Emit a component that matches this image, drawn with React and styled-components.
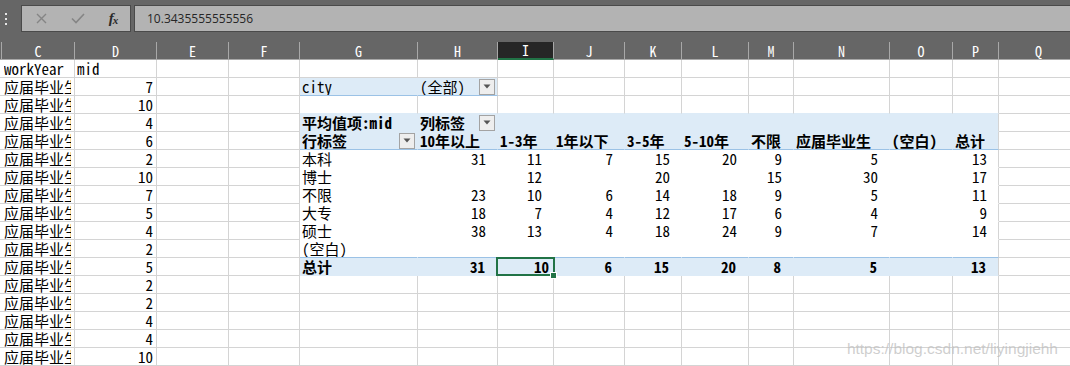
import React from 'react';
import styled, { createGlobalStyle, css } from 'styled-components';

const GRID = '#d4d4d4';
const BAND = '#ddebf7';
const BAND_LINE = '#9bc2e6';
const GREEN = '#217346';
const WHITE = '#ffffff';
const SHEET_FONT = `"Noto Sans Mono CJK SC", "Liberation Mono", "Noto Sans CJK SC", monospace`;

const COLUMNS = [
  { key: '', w: 2 },
  { key: 'C', w: 73 },
  { key: 'D', w: 82 },
  { key: 'E', w: 72 },
  { key: 'F', w: 71 },
  { key: 'G', w: 118 },
  { key: 'H', w: 80 },
  { key: 'I', w: 56 },
  { key: 'J', w: 71 },
  { key: 'K', w: 57 },
  { key: 'L', w: 67 },
  { key: 'M', w: 45 },
  { key: 'N', w: 96 },
  { key: 'O', w: 63 },
  { key: 'P', w: 46 },
  { key: 'Q', w: 80 },
];
const TEMPLATE = COLUMNS.map((c) => `${c.w}px`).join(' ');

const LEFT_VALUES = [7, 10, 4, 6, 2, 10, 7, 5, 4, 2, 5, 2, 2, 4, 4, 10];
const HEADS = ['10年以上', '1-3年', '1年以下', '3-5年', '5-10年', '不限', '应届毕业生', '(空白)', '总计'];
const PIVOT = [
  ['本科', [31, 11, 7, 15, 20, 9, 5, '', 13]],
  ['博士', ['', 12, '', 20, '', 15, 30, '', 17]],
  ['不限', [23, 10, 6, 14, 18, 9, 5, '', 11]],
  ['大专', [18, 7, 4, 12, 17, 6, 4, '', 9]],
  ['硕士', [38, 13, 4, 18, 24, 9, 7, '', 14]],
  ['(空白)', ['', '', '', '', '', '', '', '', '']],
];
const TOTALS = [31, 10, 6, 15, 20, 8, 5, '', 13];

function buildRows() {
  const rows = Array.from({ length: 17 }, () => COLUMNS.map(() => ({})));
  rows[0][1] = { text: 'workYear' };
  rows[0][2] = { text: 'mid' };
  LEFT_VALUES.forEach((v, i) => {
    rows[i + 1][1] = { text: '应届毕业生' };
    rows[i + 1][2] = { text: String(v), align: 'right' };
  });
  const G = 5;
  const P = 14;
  const span = (r, fn) => {
    for (let c = G; c <= P; c++) rows[r][c] = { ...rows[r][c], ...fn(c) };
  };
  rows[1][G] = { text: 'city', bg: BAND, rb: BAND, bb: BAND_LINE };
  rows[1][G + 1] = { text: '(全部)', bg: BAND, bb: BAND_LINE, drop: true, pr: 2 };
  span(2, () => ({ bb: BAND }));
  span(3, (c) => ({ bg: BAND, rb: c === P ? GRID : BAND, bb: BAND, bold: true }));
  rows[3][G] = { ...rows[3][G], text: '平均值项:mid' };
  rows[3][G + 1] = { ...rows[3][G + 1], text: '列标签', drop: true, pr: 2 };
  span(4, (c) => ({
    bg: BAND,
    rb: c === P ? GRID : BAND,
    bb: BAND_LINE,
    bold: true,
    text: c === G ? '行标签' : HEADS[c - G - 1],
  }));
  rows[4][G] = { ...rows[4][G], drop: true, pr: 2 };
  PIVOT.forEach(([label, vals], i) => {
    span(5 + i, (c) => ({
      rb: c === P ? GRID : WHITE,
      bb: i === PIVOT.length - 1 ? BAND_LINE : WHITE,
      text: c === G ? label : String(vals[c - G - 1]),
      align: c === G ? 'left' : 'right',
      pr: c === G ? 3 : 11,
    }));
  });
  span(11, (c) => ({
    bg: BAND,
    rb: c === P ? GRID : BAND,
    bb: BAND,
    bold: true,
    text: c === G ? '总计' : String(TOTALS[c - G - 1]),
    align: c === G ? 'left' : 'right',
    pr: c === G ? 3 : 12,
  }));
  rows[11][G + 2] = { ...rows[11][G + 2], selected: true, pr: 4 };
  return rows;
}

const ROWS = buildRows();

const GlobalStyle = createGlobalStyle`
  html, body { margin: 0; padding: 0; background: #ffffff; }
  body { overflow: hidden; }
`;

const Window = styled.div`
  position: relative;
  width: 1070px;
  height: 366px;
  overflow: hidden;
  background: #ffffff;
  font-family: ${SHEET_FONT};
  font-size: 15px;
  color: #000;
`;

const TopBar = styled.div`
  height: 42px;
  background: #666666;
  display: flex;
  align-items: flex-start;
  padding-top: 5px;
  box-sizing: border-box;
`;

const Grip = styled.div`
  width: 21px;
  height: 27px;
  display: flex;
  align-items: center;
  padding-left: 5px;
  box-sizing: border-box;
`;

const ActionBox = styled.div`
  width: 110px;
  height: 27px;
  background: #b3b3b3;
  border: 1px solid #4a4a4a;
  box-sizing: border-box;
  display: flex;
  align-items: center;
`;

const ActionSlot = styled.div`
  width: ${(p) => p.$w}px;
  height: 100%;
  display: flex;
  align-items: center;
  justify-content: center;
`;

const Fx = styled.span`
  font-family: "Liberation Serif", serif;
  font-style: italic;
  font-weight: 700;
  font-size: 15px;
  color: #2a2a2a;
  letter-spacing: -1px;
`;

const FxSub = styled.span`
  font-size: 11px;
  position: relative;
  top: 1px;
`;

const FormulaBox = styled.div`
  flex: 1;
  margin-left: 3px;
  height: 27px;
  background: #b3b3b3;
  border: 1px solid #4a4a4a;
  border-right: none;
  box-sizing: border-box;
  padding-left: 12px;
  display: flex;
  align-items: center;
  font-family: "Open Sans", "Noto Sans", sans-serif;
  font-size: 12px;
  color: #262626;
`;

const HeaderRow = styled.div`
  display: grid;
  grid-template-columns: ${TEMPLATE};
  height: 18px;
  background: #666666;
`;

const HeadCell = styled.div`
  box-sizing: border-box;
  height: 18px;
  border-right: 1px solid #a8a8a8;
  border-bottom: ${(p) => (p.$sel ? `2px solid ${GREEN}` : '1px solid #a8a8a8')};
  background: ${(p) => (p.$sel ? '#262626' : 'transparent')};
  color: #ffffff;
  font-size: 14px;
  display: flex;
  align-items: center;
  justify-content: center;
  overflow: hidden;
`;

const Sheet = styled.div`
  display: grid;
  grid-template-columns: ${TEMPLATE};
  grid-auto-rows: 18px;
`;

const Cell = styled.div`
  box-sizing: border-box;
  height: 18px;
  border-right: 1px solid ${(p) => p.$rb || GRID};
  border-bottom: 1px solid ${(p) => p.$bb || GRID};
  background: ${(p) => p.$bg || WHITE};
  display: flex;
  align-items: center;
  justify-content: ${(p) => (p.$align === 'right' ? 'flex-end' : 'space-between')};
  padding: 0 ${(p) => p.$pr ?? 3}px 0 2px;
  white-space: nowrap;
  overflow: hidden;
  font-weight: ${(p) => (p.$bold ? 700 : 400)};
  ${(p) =>
    p.$sel &&
    css`
      position: relative;
      overflow: visible;
      &::after {
        content: '';
        position: absolute;
        left: -2px;
        right: -2px;
        top: -1px;
        bottom: -1px;
        border: 2px solid ${GREEN};
        z-index: 2;
        pointer-events: none;
      }
      &::before {
        content: '';
        position: absolute;
        right: -4px;
        bottom: -4px;
        width: 5px;
        height: 5px;
        background: ${GREEN};
        border: 1px solid #ffffff;
        z-index: 3;
      }
    `}
`;

const CellText = styled.span`
  overflow: hidden;
`;

const DropButton = styled.span`
  flex: none;
  width: 16px;
  height: 16px;
  box-sizing: border-box;
  border: 1px solid #a3a3a3;
  background: #eeeeee;
  display: flex;
  align-items: center;
  justify-content: center;
`;

const Watermark = styled.div`
  position: absolute;
  right: 12px;
  bottom: 8px;
  font-family: "Liberation Sans", Arial, sans-serif;
  font-size: 15.5px;
  color: rgba(190, 190, 190, 0.75);
  pointer-events: none;
`;

function Dropdown() {
  return (
    <DropButton>
      <svg width="8" height="5" viewBox="0 0 8 5">
        <polygon points="0.5,0.5 7.5,0.5 4,4.5" fill="#555" />
      </svg>
    </DropButton>
  );
}

export default function App() {
  return (
    <>
      <GlobalStyle />
      <Window>
        <TopBar>
          <Grip>
            <svg width="3" height="12" viewBox="0 0 3 12">
              <rect x="0" y="0" width="2" height="2" fill="#e6e6e6" />
              <rect x="0" y="5" width="2" height="2" fill="#e6e6e6" />
              <rect x="0" y="10" width="2" height="2" fill="#e6e6e6" />
            </svg>
          </Grip>
          <ActionBox>
            <ActionSlot $w={38}>
              <svg width="11" height="11" viewBox="0 0 11 11">
                <path d="M1 1 L10 10 M10 1 L1 10" stroke="#858585" strokeWidth="1.4" fill="none" />
              </svg>
            </ActionSlot>
            <ActionSlot $w={36}>
              <svg width="14" height="11" viewBox="0 0 14 11">
                <path d="M1 5.5 L5 9.5 L13 1" stroke="#858585" strokeWidth="1.6" fill="none" />
              </svg>
            </ActionSlot>
            <ActionSlot $w={34}>
              <Fx>
                f<FxSub>x</FxSub>
              </Fx>
            </ActionSlot>
          </ActionBox>
          <FormulaBox>10.3435555555556</FormulaBox>
        </TopBar>
        <HeaderRow>
          {COLUMNS.map((c, i) => (
            <HeadCell key={i} $sel={c.key === 'I'}>
              {c.key}
            </HeadCell>
          ))}
        </HeaderRow>
        <Sheet>
          {ROWS.map((row, r) =>
            row.map((cell, c) => (
              <Cell
                key={`${r}-${c}`}
                $align={cell.align}
                $bold={cell.bold}
                $bg={cell.bg}
                $rb={cell.rb}
                $bb={cell.bb}
                $pr={cell.pr}
                $sel={cell.selected}
              >
                <CellText>{cell.text}</CellText>
                {cell.drop && <Dropdown />}
              </Cell>
            ))
          )}
        </Sheet>
        <Watermark>https://blog.csdn.net/liyingjiehh</Watermark>
      </Window>
    </>
  );
}
